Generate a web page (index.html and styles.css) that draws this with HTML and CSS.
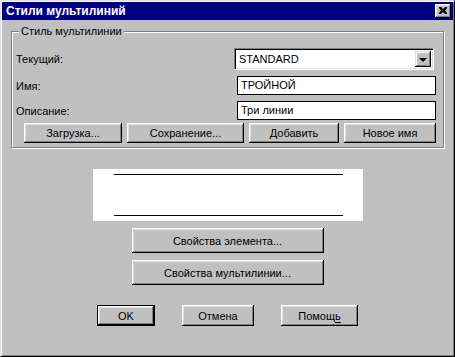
FILE: index.html
```html
<!DOCTYPE html>
<html lang="ru">
<head>
    <meta charset="UTF-8">
    <meta name="viewport" content="width=device-width, initial-scale=1.0">
    <title>Стили мультилиний</title>
    <link rel="stylesheet" href="styles.css">
</head>
<body>
    <div class="window">
        <div class="titlebar">
            <span class="title">Стили мультилиний</span>
            <button class="close-btn" aria-label="Закрыть">
                <svg width="8" height="7" viewBox="0 0 8 7">
                    <path d="M0 0h2l2 2 2-2h2v1l-2 2.5 2 2.5v1h-2l-2-2-2 2h-2v-1l2-2.5-2-2.5z" fill="#000"/>
                </svg>
            </button>
        </div>

        <div class="group">
            <span class="group-title">Стиль мультилинии</span>

            <div class="row">
                <label class="row-label">Текущий:</label>
                <div class="combo">
                    <span class="combo-value">STANDARD</span>
                    <span class="combo-btn"><span class="arrow"></span></span>
                </div>
            </div>

            <div class="row">
                <label class="row-label">Имя:</label>
                <div class="field">ТРОЙНОЙ</div>
            </div>

            <div class="row">
                <label class="row-label">Описание:</label>
                <div class="field">Три линии</div>
            </div>

            <div class="btn-row">
                <button class="btn btn-load">Загрузка...</button>
                <button class="btn btn-save">Сохранение...</button>
                <button class="btn btn-add">Добавить</button>
                <button class="btn btn-rename">Новое имя</button>
            </div>
        </div>

        <!-- образец мультилинии -->
        <div class="preview">
            <div class="preview-line"></div>
            <div class="preview-line"></div>
        </div>

        <button class="btn btn-props">Свойства элемента...</button>
        <button class="btn btn-props">Свойства мультилинии...</button>

        <div class="dialog-buttons">
            <button class="btn btn-ok">OK</button>
            <button class="btn btn-cancel">Отмена</button>
            <button class="btn btn-help">Помощ<u>ь</u></button>
        </div>
    </div>
</body>
</html>
```

FILE: styles.css
```css
* {
    box-sizing: border-box;
}

body {
    margin: 0;
    font-family: 'Liberation Sans', Arial, sans-serif;
    font-size: 11px;
    color: #000;
    background-color: #c0c0c0;
}

.window {
    width: 455px;
    height: 357px;
    background-color: #c0c0c0;
    border-top: 1px solid #dfdfdf;
    border-left: 1px solid #dfdfdf;
    border-right: 1px solid #000;
    border-bottom: 1px solid #000;
    box-shadow: inset 1px 1px 0 #fff, inset -1px -1px 0 #808080;
    padding: 1px;
    display: flex;
    flex-direction: column;
}

.titlebar {
    height: 18px;
    background-color: #000080;
    display: flex;
    align-items: center;
    justify-content: space-between;
    padding: 0 2px 0 4px;
}

.title {
    color: #fff;
    font-weight: bold;
    font-size: 12px;
}

.close-btn {
    width: 16px;
    height: 14px;
    padding: 0;
    border: none;
    background-color: #c0c0c0;
    box-shadow: inset -1px -1px 0 #000, inset 1px 1px 0 #fff, inset -2px -2px 0 #808080, inset 2px 2px 0 #dfdfdf;
    display: flex;
    align-items: center;
    justify-content: center;
}

.close-btn svg {
    display: block;
    margin: 0 0 1px 0;
}

.group {
    position: relative;
    margin: 11px 9px 0 9px;
    border: 1px solid #808080;
    box-shadow: 1px 1px 0 #fff, inset 1px 1px 0 #fff;
    padding: 16px 7px 4px 4px;
    display: flex;
    flex-direction: column;
}

.group-title {
    position: absolute;
    top: -7px;
    left: 7px;
    padding: 0 2px;
    background-color: #c0c0c0;
    line-height: 13px;
}

.row {
    display: flex;
    align-items: center;
    margin-bottom: 6px;
}

.row:nth-child(4) {
    margin-bottom: 3px;
}

.row-label {
    flex: 1;
}

.combo {
    width: 200px;
    height: 22px;
    margin-right: 2px;
    background-color: #fff;
    border-top: 1px solid #808080;
    border-left: 1px solid #808080;
    border-right: 1px solid #fff;
    border-bottom: 1px solid #fff;
    box-shadow: inset 1px 1px 0 #000, inset -1px -1px 0 #dfdfdf;
    padding: 2px;
    display: flex;
    align-items: center;
}

.combo-value {
    flex: 1;
    padding-left: 2px;
}

.combo-btn {
    width: 16px;
    height: 16px;
    background-color: #c0c0c0;
    box-shadow: inset -1px -1px 0 #000, inset 1px 1px 0 #dfdfdf, inset -2px -2px 0 #808080, inset 2px 2px 0 #fff;
    display: flex;
    align-items: center;
    justify-content: center;
}

.arrow {
    width: 0;
    height: 0;
    border-left: 4px solid transparent;
    border-right: 4px solid transparent;
    border-top: 4px solid #000;
    margin-top: 1px;
}

.field {
    width: 199px;
    height: 19px;
    background-color: #fff;
    border: 1px solid #000;
    padding: 0 3px;
    line-height: 17px;
}

.btn-row {
    display: flex;
    justify-content: space-between;
    margin-left: 8px;
}

.btn {
    height: 20px;
    padding: 0;
    font-family: 'Liberation Sans', Arial, sans-serif;
    font-size: 11px;
    color: #000;
    background-color: #c0c0c0;
    border: none;
    box-shadow: inset -1px -1px 0 #000, inset 1px 1px 0 #fff, inset -2px -2px 0 #808080, inset 2px 2px 0 #dfdfdf;
}

.btn-load {
    width: 98px;
}

.btn-save {
    width: 117px;
}

.btn-add {
    width: 90px;
}

.btn-rename {
    width: 92px;
}

.preview {
    width: 270px;
    height: 52px;
    margin: 21px auto 0 auto;
    background-color: #fff;
    padding: 5px 20px 5px 21px;
    display: flex;
    flex-direction: column;
    justify-content: space-between;
}

.preview-line {
    height: 1px;
    background-color: #000;
}

.btn-props {
    display: block;
    width: 192px;
    height: 25px;
    margin: 7px auto 0 auto;
}

.dialog-buttons {
    display: flex;
    justify-content: center;
    gap: 27px;
    margin-top: 20px;
}

.dialog-buttons .btn {
    height: 21px;
}

.btn-ok {
    width: 58px;
    border: 1px solid #000;
}

.btn-cancel {
    width: 72px;
}

.btn-help {
    width: 77px;
}

.btn-help u {
    text-decoration-thickness: 1px;
    text-underline-offset: 2px;
}
```
